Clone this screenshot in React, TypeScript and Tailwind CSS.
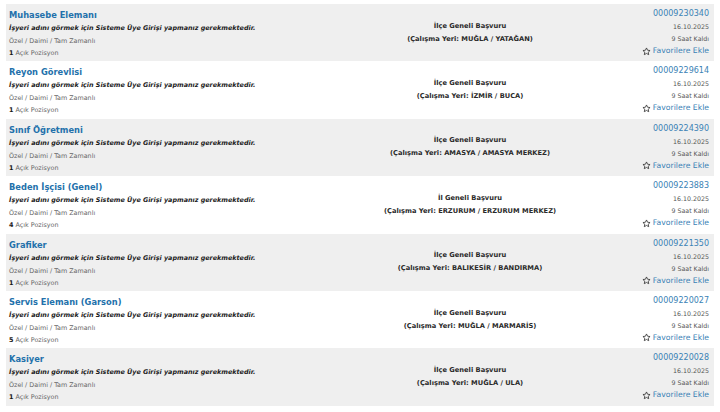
import React from 'react';

type Job = {
  title: string;
  count: number;
  scope: string;
  place: string;
  id: string;
};

const jobs: Job[] = [
  { title: 'Muhasebe Elemanı', count: 1, scope: 'İlçe Geneli Başvuru', place: 'MUĞLA / YATAĞAN', id: '00009230340' },
  { title: 'Reyon Görevlisi', count: 1, scope: 'İlçe Geneli Başvuru', place: 'İZMİR / BUCA', id: '00009229614' },
  { title: 'Sınıf Öğretmeni', count: 1, scope: 'İlçe Geneli Başvuru', place: 'AMASYA / AMASYA MERKEZ', id: '00009224390' },
  { title: 'Beden İşçisi (Genel)', count: 4, scope: 'İl Geneli Başvuru', place: 'ERZURUM / ERZURUM MERKEZ', id: '00009223883' },
  { title: 'Grafiker', count: 1, scope: 'İlçe Geneli Başvuru', place: 'BALIKESİR / BANDIRMA', id: '00009221350' },
  { title: 'Servis Elemanı (Garson)', count: 5, scope: 'İlçe Geneli Başvuru', place: 'MUĞLA / MARMARİS', id: '00009220027' },
  { title: 'Kasiyer', count: 1, scope: 'İlçe Geneli Başvuru', place: 'MUĞLA / ULA', id: '00009220028' },
];

function Star() {
  return (
    <svg width="9" height="9" viewBox="0 0 24 24" fill="none" stroke="#333" strokeWidth="2.2" strokeLinejoin="round">
      <path d="M12 2.5l2.9 6.1 6.6.8-4.9 4.5 1.3 6.6L12 17.2l-5.9 3.3 1.3-6.6-4.9-4.5 6.6-.8z" />
    </svg>
  );
}

function JobRow({ job, shaded }: { job: Job; shaded: boolean }) {
  return (
    <div className={`grid grid-cols-[330px_268px_1fr] h-[57.4px] ${shaded ? 'bg-[#efefef]' : 'bg-white'}`}>
      {/* Left */}
      <div className="pl-[3px] pt-[4px]">
        <div className="text-[8.3px] leading-[14px] font-bold text-[#2371ab]">{job.title}</div>
        <div className="text-[6.4px] leading-[13px] font-bold italic text-[#1a1a1a]">
          İşyeri adını görmek için Sisteme Üye Girişi yapmanız gerekmektedir.
        </div>
        <div className="text-[6.4px] leading-[12px] text-[#666]">Özel / Daimi / Tam Zamanlı</div>
        <div className="text-[6.4px] leading-[12px] text-[#666]">
          <span className="font-bold text-[#1a1a1a]">{job.count}</span> Açık Pozisyon
        </div>
      </div>
      {/* Middle */}
      <div className="flex flex-col items-center justify-center text-[6.7px] leading-[13px] font-bold text-[#2a2a2a]">
        <div>{job.scope}</div>
        <div>(Çalışma Yeri: {job.place})</div>
      </div>
      {/* Right */}
      <div className="flex flex-col items-end pr-[5px] pt-[3px]">
        <div className="text-[8px] leading-[14px] text-[#3a82b5]">{job.id}</div>
        <div className="text-[6.3px] leading-[12px] text-[#555]">16.10.2025</div>
        <div className="text-[6.3px] leading-[12px] text-[#555]">9 Saat Kaldı</div>
        <div className="flex items-center gap-[2px] text-[7.7px] leading-[12px] text-[#3a82b5]">
          <Star />
          <span>Favorilere Ekle</span>
        </div>
      </div>
    </div>
  );
}

export default function App() {
  return (
    <div className="w-[720px] h-[412px] bg-white overflow-hidden px-[6px] pt-[4px]" style={{ fontFamily: '"DejaVu Sans", Verdana, sans-serif' }}>
      {jobs.map((job, i) => (
        <JobRow key={job.id} job={job} shaded={i % 2 === 0} />
      ))}
    </div>
  );
}
